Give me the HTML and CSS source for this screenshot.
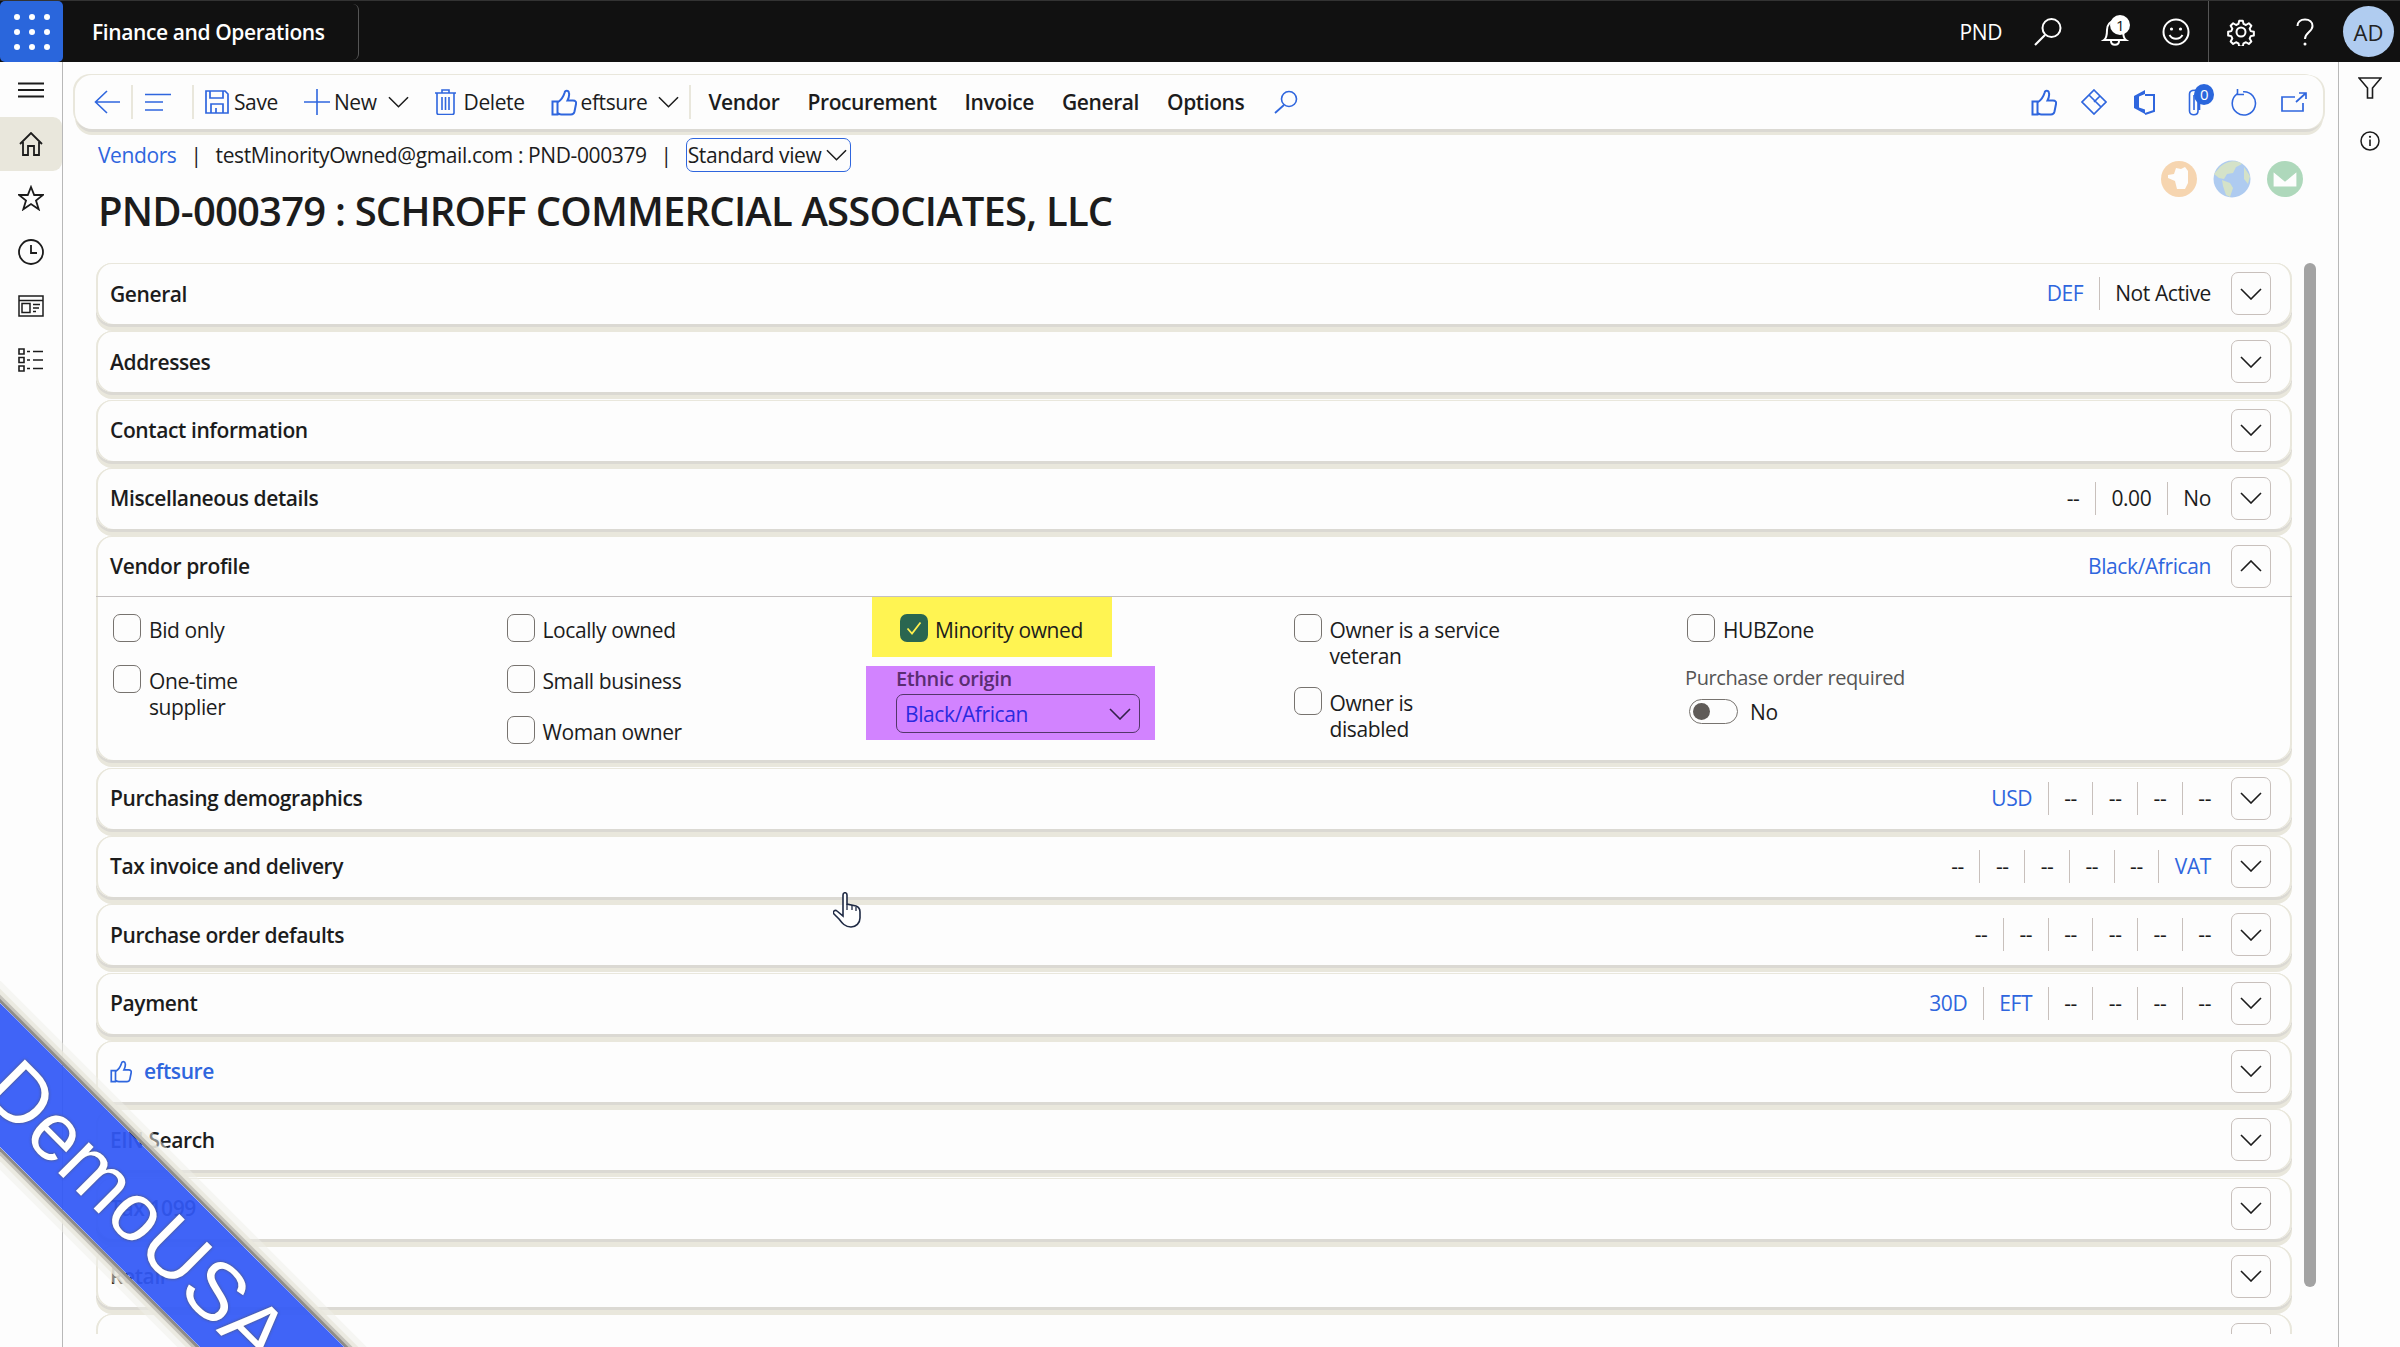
FILE: index.html
```html
<!DOCTYPE html>
<html lang="en">
<head>
    <meta charset="UTF-8">
    <meta name="viewport" content="width=device-width, initial-scale=1.0">
    <link rel="stylesheet" href="styles.css">
    <title>Finance and Operations</title>
</head>
<body>
<svg class="sprite" width="0" height="0">
    <symbol id="chev" viewBox="0 0 22 12"><path d="M1 1l10 10L21 1" fill="none" stroke="currentColor" stroke-width="1.6"/></symbol>
    <symbol id="thumb" viewBox="0 0 26 27"><path d="M1.5 12.5h5v13h-5zM6.500 13.500c3-2 6-6 7-9.500.5-3 4-3 4.500 0 .6 3-.5 5.500-1.500 7.500h5.500c2.500 0 3.500 1.500 3 3.500l-1.500 7.500c-.5 2-1.500 3-3.500 3H10.500c-2 0-3-1-4-1.500" fill="none" stroke="currentColor" stroke-width="2"/></symbol>
</svg>

<header class="topbar">
    <div class="launcher">
        <i></i><i></i><i></i><i></i><i></i><i></i><i></i><i></i><i></i>
    </div>
    <div class="app-name">Finance and Operations</div>
    <div class="top-right">
        <span class="company">PND</span>
        <span class="top-btn"><svg width="30" height="30" viewBox="0 0 30 30"><circle cx="18.500" cy="11" r="9" fill="none" stroke="#fff" stroke-width="2"/><path d="M12 18L2 28" stroke="#fff" stroke-width="2.200"/></svg></span>
        <span class="top-btn bell"><svg width="32" height="30" viewBox="0 0 32 30"><path d="M4 23c3-2 3-6 3-10 0-5 3-9 8-9s8 4 8 9c0 4 0 8 3 10zM11 24c0 5 8 5 8 0" fill="none" stroke="#fff" stroke-width="2"/></svg><b class="bell-badge">1</b></span>
        <span class="top-btn"><svg width="28" height="28" viewBox="0 0 28 28"><circle cx="14" cy="14" r="12.500" fill="none" stroke="#fff" stroke-width="2"/><circle cx="9.500" cy="11" r="1.600" fill="#fff"/><circle cx="18.500" cy="11" r="1.600" fill="#fff"/><path d="M7.500 17c3 5 10 5 13 0" fill="none" stroke="#fff" stroke-width="2"/></svg></span>
        <span class="top-sep"></span>
        <span class="top-btn"><svg width="28" height="28" viewBox="0 0 28 28"><circle cx="14" cy="14" r="4.500" fill="none" stroke="#fff" stroke-width="2"/><path d="M12 1.500h4l.8 3.500 2.700 1.200 3.200-1.900 2.800 2.800-1.900 3.200 1.200 2.700 3.500.8v4l-3.500.8-1.200 2.700 1.900 3.200-2.800 2.800-3.200-1.900-2.700 1.200-.8 3.500h-4l-.8-3.500-2.700-1.200-3.200 1.900-2.800-2.800 1.900-3.200-1.200-2.700-3.500-.8v-4l3.500-.8 1.200-2.700-1.900-3.200 2.800-2.800 3.200 1.900 2.700-1.200z" transform="translate(1.400 1.400) scale(.9)" fill="none" stroke="#fff" stroke-width="2.200" stroke-linejoin="round"/></svg></span>
        <span class="top-btn"><svg width="18" height="28" viewBox="0 0 18 28"><path d="M1.500 8c0-4 3-6.500 7.500-6.500S16.500 4 16.500 8c0 6-7.500 6-7.500 13" fill="none" stroke="#fff" stroke-width="2"/><circle cx="9" cy="26" r="1.500" fill="#fff"/></svg></span>
        <span class="avatar">AD</span>
    </div>
</header>

<div class="shell">
    <nav class="leftnav">
        <div class="nav-item"><svg width="26" height="16" viewBox="0 0 26 16"><path d="M0 1.500h26M0 8h26M0 14.500h26" stroke="#1c1c1c" stroke-width="2"/></svg></div>
        <div class="nav-item active"><svg width="24" height="24" viewBox="0 0 24 24"><path d="M1 12L12 1l11 11M4 10v13h5v-9h6v9h5V10" fill="none" stroke="#1c1c1c" stroke-width="1.800"/></svg></div>
        <div class="nav-item"><svg width="26" height="26" viewBox="0 0 26 26"><path d="M13 2l3.200 8H25l-7 5.500 2.700 8.800L13 19l-7.700 5.300L8 15.500 1 10h8.800z" fill="none" stroke="#1c1c1c" stroke-width="1.800"/></svg></div>
        <div class="nav-item"><svg width="26" height="26" viewBox="0 0 26 26"><circle cx="13" cy="13" r="12" fill="none" stroke="#1c1c1c" stroke-width="1.800"/><path d="M13 6v8h6" fill="none" stroke="#1c1c1c" stroke-width="1.800"/></svg></div>
        <div class="nav-item"><svg width="26" height="22" viewBox="0 0 26 22"><path d="M1 1h24v20H1zM1 5.500h24M4 8.500h8v9H4zM15 9.500h7M15 13h6M15 16.500h3" fill="none" stroke="#1c1c1c" stroke-width="1.500"/></svg></div>
        <div class="nav-item"><svg width="26" height="24" viewBox="0 0 26 24"><path d="M1 1h5v5H1zM1 9.500h5v5H1zM1 18h5v5H1zM9 3.500h3M15 3.500h10M9 12h3M15 12h10M9 20.500h3M15 20.500h10" fill="none" stroke="#1c1c1c" stroke-width="1.600"/></svg></div>
    </nav>

    <main class="main">
        <div class="toolbar">
            <span class="tb-icon first"><svg width="26" height="24" viewBox="0 0 26 24"><path d="M13 1L1.500 12 13 23M2 12h24" fill="none" stroke="currentColor" stroke-width="1.600"/></svg></span>
            <span class="tb-sep"></span>
            <span class="tb-icon lines"><svg width="26" height="19" viewBox="0 0 26 19"><path d="M0 1.500h26M0 9h18M0 17h18" fill="none" stroke="currentColor" stroke-width="1.600"/></svg></span>
            <span class="tb-sep"></span>
            <span class="tb-btn save"><svg width="24" height="24" viewBox="0 0 24 24"><path d="M1 1h19l3 3v19H1zM5 1v7h13V1M6 23v-9h12v9M11 18v5" fill="none" stroke="currentColor" stroke-width="1.700"/></svg><span>Save</span></span>
            <span class="tb-btn new"><svg class="plus" width="26" height="26" viewBox="0 0 26 26"><path d="M0 13h26M13 0v26" stroke="currentColor" stroke-width="1.600"/></svg><span>New</span><svg class="tb-chev" width="21" height="12"><use href="#chev"/></svg></span>
            <span class="tb-btn del"><svg width="21" height="26" viewBox="0 0 21 26"><path d="M0 4h21M7 4V1h7v3M2 4v20c0 1 1 1.500 2 1.500h13c1 0 2-.5 2-1.500V4M7 8v13M10.500 8v13M14 8v13" fill="none" stroke="currentColor" stroke-width="1.600"/></svg><span>Delete</span></span>
            <span class="tb-btn eft"><svg width="26" height="27"><use href="#thumb"/></svg><span>eftsure</span><svg class="tb-chev" width="21" height="12"><use href="#chev"/></svg></span>
            <span class="tb-sep menu-sep"></span>
            <span class="tb-menu">Vendor</span>
            <span class="tb-menu">Procurement</span>
            <span class="tb-menu">Invoice</span>
            <span class="tb-menu">General</span>
            <span class="tb-menu">Options</span>
            <span class="tb-icon find"><svg width="24" height="24" viewBox="0 0 24 24"><circle cx="15" cy="9" r="7.500" fill="none" stroke="currentColor" stroke-width="1.600"/><path d="M10 15L1 23" stroke="currentColor" stroke-width="1.800"/></svg></span>
            <div class="tb-right">
                <span class="tb-r thumb-r"><svg width="26" height="27"><use href="#thumb"/></svg></span>
                <span class="tb-r"><svg width="26" height="26" viewBox="0 0 26 26"><path d="M13 1l12 12-12 12L1 13zM8 6l12 12M13 13l6-6" fill="none" stroke="currentColor" stroke-width="1.700"/></svg></span>
                <span class="tb-r"><svg width="22" height="26" viewBox="0 0 22 26"><path d="M1 7L12 1v24L1 19z" fill="currentColor"/><path d="M7 6h14v16l-9 3" fill="none" stroke="currentColor" stroke-width="2"/><path d="M6 7.500v11l6 2V5z" fill="#fdfdfd"/></svg></span>
                <span class="tb-r clip"><svg width="13" height="27" viewBox="0 0 13 27"><path d="M10 9v13c0 5-8.500 5-8.500 0V5c0-5 10-5 10 0v16M6 6v15" fill="none" stroke="currentColor" stroke-width="1.600"/></svg><b class="clip-badge">0</b></span>
                <span class="tb-r"><svg width="28" height="28" viewBox="0 0 28 28"><path d="M7 5a12.500 12.500 0 1 0 6-2" fill="none" stroke="currentColor" stroke-width="1.700"/><path d="M7 0v6h7" fill="none" stroke="currentColor" stroke-width="1.700"/></svg></span>
                <span class="tb-r"><svg width="26" height="20" viewBox="0 0 26 20"><path d="M14 5H1v14h21v-8M15 10L25 1M18 1h7v6" fill="none" stroke="currentColor" stroke-width="1.700"/></svg></span>
            </div>
        </div>

        <div class="page-head">
            <div class="page-left">
                <div class="crumbs">
                    <a class="link">Vendors</a>
                    <span class="pipe">|</span>
                    <span>testMinorityOwned@gmail.com : PND-000379</span>
                    <span class="pipe">|</span>
                    <span class="view-select">Standard view <svg width="21" height="12"><use href="#chev"/></svg></span>
                </div>
                <h1 class="page-title">PND-000379 : SCHROFF COMMERCIAL ASSOCIATES, LLC</h1>
            </div>
            <div class="quick-icons">
                <svg width="36" height="36" viewBox="0 0 36 36"><circle cx="18" cy="18" r="18" fill="#f6d5b0"/><path d="M7 14l6-1 2-6 5 1 4-2 3 4v12l-3 6h-8l-2-8-7-3z" fill="#fdfdfd"/></svg>
                <svg width="38" height="38" viewBox="0 0 38 38"><circle cx="19" cy="19" r="18.500" fill="#aecbf0"/><path d="M6 8c6-7 18-9 23-4l-6 3-3 6-6 1-3 5-5-1-5-4zM31 7l6 9-2 8-4-5zM9 20l8 3 3 5-3 9-4-2-3-9z" fill="#d4e2c8"/></svg>
                <svg width="36" height="36" viewBox="0 0 36 36"><circle cx="18" cy="18" r="18" fill="#aed8bb"/><path d="M6 10h24v16H6zM6 10l12 10 12-10" fill="#fdfdfd" stroke="#aed8bb" stroke-width="1.200"/></svg>
            </div>
        </div>

        <div class="scroll-area">
            <div class="panels">
                <section class="panel">
                    <div class="panel-head">
                        <span class="panel-title">General</span>
                        <div class="summary"><span class="sum link">DEF</span><span class="sum">Not Active</span></div>
                        <span class="expand"><svg width="22" height="12"><use href="#chev"/></svg></span>
                    </div>
                </section>
                <section class="panel">
                    <div class="panel-head">
                        <span class="panel-title">Addresses</span>
                        <span class="expand"><svg width="22" height="12"><use href="#chev"/></svg></span>
                    </div>
                </section>
                <section class="panel">
                    <div class="panel-head">
                        <span class="panel-title">Contact information</span>
                        <span class="expand"><svg width="22" height="12"><use href="#chev"/></svg></span>
                    </div>
                </section>
                <section class="panel">
                    <div class="panel-head">
                        <span class="panel-title">Miscellaneous details</span>
                        <div class="summary"><span class="sum">--</span><span class="sum">0.00</span><span class="sum">No</span></div>
                        <span class="expand"><svg width="22" height="12"><use href="#chev"/></svg></span>
                    </div>
                </section>

                <section class="panel open">
                    <div class="panel-head">
                        <span class="panel-title">Vendor profile</span>
                        <div class="summary"><span class="sum link">Black/African</span></div>
                        <span class="expand"><svg class="up" width="22" height="12"><use href="#chev"/></svg></span>
                    </div>
                    <div class="panel-body">
                        <div class="col">
                            <div class="check"><span class="box"></span><span class="check-label">Bid only</span></div>
                            <div class="check"><span class="box"></span><span class="check-label">One-time<br>supplier</span></div>
                        </div>
                        <div class="col">
                            <div class="check"><span class="box"></span><span class="check-label">Locally owned</span></div>
                            <div class="check"><span class="box"></span><span class="check-label">Small business</span></div>
                            <div class="check"><span class="box"></span><span class="check-label">Woman owner</span></div>
                        </div>
                        <div class="col col-mark">
                            <div class="mark-yellow">
                                <span class="box checked"><svg width="16" height="14" viewBox="0 0 16 14"><path d="M1.500 7.500l4.500 5L14.500 1.500" fill="none" stroke="#fff04e" stroke-width="1.800"/></svg></span>
                                <span class="check-label">Minority owned</span>
                            </div>
                            <div class="mark-purple">
                                <div class="field-label dark">Ethnic origin</div>
                                <div class="select"><span>Black/African</span><svg width="22" height="12"><use href="#chev"/></svg></div>
                            </div>
                        </div>
                        <div class="col">
                            <div class="check wrap"><span class="box"></span><span class="check-label">Owner is a service<br>veteran</span></div>
                            <div class="check"><span class="box"></span><span class="check-label">Owner is<br>disabled</span></div>
                        </div>
                        <div class="col">
                            <div class="check"><span class="box"></span><span class="check-label">HUBZone</span></div>
                            <div class="field-label shift">Purchase order required</div>
                            <div class="toggle-row"><span class="toggle"><i></i></span><span>No</span></div>
                        </div>
                    </div>
                </section>

                <section class="panel">
                    <div class="panel-head">
                        <span class="panel-title">Purchasing demographics</span>
                        <div class="summary"><span class="sum link">USD</span><span class="sum">--</span><span class="sum">--</span><span class="sum">--</span><span class="sum">--</span></div>
                        <span class="expand"><svg width="22" height="12"><use href="#chev"/></svg></span>
                    </div>
                </section>
                <section class="panel">
                    <div class="panel-head">
                        <span class="panel-title">Tax invoice and delivery</span>
                        <div class="summary"><span class="sum">--</span><span class="sum">--</span><span class="sum">--</span><span class="sum">--</span><span class="sum">--</span><span class="sum link">VAT</span></div>
                        <span class="expand"><svg width="22" height="12"><use href="#chev"/></svg></span>
                    </div>
                </section>
                <section class="panel">
                    <div class="panel-head">
                        <span class="panel-title">Purchase order defaults</span>
                        <div class="summary"><span class="sum">--</span><span class="sum">--</span><span class="sum">--</span><span class="sum">--</span><span class="sum">--</span><span class="sum">--</span></div>
                        <span class="expand"><svg width="22" height="12"><use href="#chev"/></svg></span>
                    </div>
                </section>
                <section class="panel">
                    <div class="panel-head">
                        <span class="panel-title">Payment</span>
                        <div class="summary"><span class="sum link">30D</span><span class="sum link">EFT</span><span class="sum">--</span><span class="sum">--</span><span class="sum">--</span><span class="sum">--</span></div>
                        <span class="expand"><svg width="22" height="12"><use href="#chev"/></svg></span>
                    </div>
                </section>
                <section class="panel">
                    <div class="panel-head">
                        <span class="panel-title link"><svg class="title-thumb" width="22" height="23"><use href="#thumb"/></svg>eftsure</span>
                        <span class="expand"><svg width="22" height="12"><use href="#chev"/></svg></span>
                    </div>
                </section>
                <section class="panel">
                    <div class="panel-head">
                        <span class="panel-title">EIN Search</span>
                        <span class="expand"><svg width="22" height="12"><use href="#chev"/></svg></span>
                    </div>
                </section>
                <section class="panel">
                    <div class="panel-head">
                        <span class="panel-title">Tax 1099</span>
                        <span class="expand"><svg width="22" height="12"><use href="#chev"/></svg></span>
                    </div>
                </section>
                <section class="panel">
                    <div class="panel-head">
                        <span class="panel-title">Retail</span>
                        <span class="expand"><svg width="22" height="12"><use href="#chev"/></svg></span>
                    </div>
                </section>
                <section class="panel">
                    <div class="panel-head">
                        <span class="panel-title"></span>
                        <span class="expand"><svg width="22" height="12"><use href="#chev"/></svg></span>
                    </div>
                </section>
            </div>
            <div class="scrollbar"></div>
        </div>
    </main>

    <aside class="rail">
        <svg class="rail-filter" width="24" height="22" viewBox="0 0 24 22"><path d="M1 1h22l-8.500 10v10h-5V11z" fill="none" stroke="#1c1c1c" stroke-width="1.600"/></svg>
        <svg class="rail-info" width="20" height="20" viewBox="0 0 20 20"><circle cx="10" cy="10" r="9" fill="none" stroke="#1c1c1c" stroke-width="1.500"/><path d="M10 8.500v6.500" stroke="#1c1c1c" stroke-width="1.600"/><circle cx="10" cy="5.800" r="1.100" fill="#1c1c1c"/></svg>
    </aside>
</div>

<svg class="hand" width="28" height="36" viewBox="0 0 28 36"><path d="M10 14V3c0-3 4-3 4 0v9l9 2c3 1 4 3 4 6v6c0 5-4 9-9 9-6 0-9-4-12-8l-5-5c-2-2 1-5 3-3l6 5z" fill="#fff" stroke="#1f2a44" stroke-width="1.600"/><path d="M14 12v6M19 13v5M23 15v4" stroke="#1f2a44" stroke-width="1.300"/></svg>

<div class="ribbon"><span>DemoUSA</span></div>
</body>
</html>
```

FILE: styles.css
```css
html, body {
    margin: 0;
    width: 2400px;
    height: 1347px;
    overflow: hidden;
}

body {
    position: relative;
    background-color: #fdfdfd;
    color: #1c1c1c;
    font-family: "Open Sans", "Noto Sans", sans-serif;
    font-size: 21px;
    letter-spacing: -0.4px;
}

.sprite {
    position: absolute;
}

.link {
    color: #2f66de;
}

/* top bar */
.topbar {
    display: flex;
    align-items: center;
    height: 62px;
    background-color: #111;
    border-top: 1px solid #333;
    box-sizing: border-box;
    color: #fff;
}

.launcher {
    display: grid;
    grid-template-columns: repeat(3, 6px);
    grid-auto-rows: 6px;
    gap: 9px;
    align-content: center;
    justify-content: center;
    width: 63px;
    height: 61px;
    background-color: #2a66dc;
    border-radius: 5px;
}

.launcher i {
    background-color: #fff;
    border-radius: 50%;
}

.app-name {
    display: flex;
    align-items: center;
    width: 266px;
    height: 56px;
    margin-left: 29px;
    border-right: 1px solid #555;
    border-radius: 0 6px 6px 0;
    font-weight: 600;
}

.top-right {
    display: flex;
    align-items: center;
    margin-left: auto;
    height: 100%;
}

.company {
    margin-right: 14px;
}

.top-btn {
    position: relative;
    display: flex;
    align-items: center;
    justify-content: center;
    width: 64px;
    height: 100%;
}

.top-sep {
    width: 1px;
    height: 100%;
    background-color: #555;
}

.bell svg {
    margin-left: 8px;
}

.bell-badge {
    position: absolute;
    top: 14px;
    left: 30px;
    width: 20px;
    height: 20px;
    border-radius: 50%;
    background-color: #fff;
    color: #111;
    font-size: 15px;
    font-weight: 400;
    line-height: 20px;
    text-align: center;
}

.avatar {
    display: flex;
    align-items: center;
    justify-content: center;
    width: 51px;
    height: 51px;
    margin: 0 6px 0 6px;
    border-radius: 50%;
    background-color: #b0ccf0;
    color: #222;
    font-size: 22px;
    letter-spacing: 0;
}

.shell {
    display: flex;
    height: 1285px;
}

/* left nav */
.leftnav {
    flex: none;
    width: 62px;
    padding-top: 1px;
    border-right: 1px solid #b8b8b8;
}

.nav-item {
    display: flex;
    align-items: center;
    justify-content: center;
    height: 54px;
}

.nav-item.active {
    background-color: #e9e7dc;
    border-radius: 0 9px 9px 0;
}

.main {
    flex: 1;
    min-width: 0;
    display: flex;
    flex-direction: column;
}

/* action bar */
.toolbar {
    display: flex;
    align-items: center;
    flex: none;
    width: 2248px;
    height: 54px;
    margin: 13px 0 0 12px;
    padding-left: 19px;
    box-sizing: border-box;
    background-color: #fdfdfd;
    border-radius: 17px;
    color: #2f66de;
    box-shadow: -2px -1px 0 #e9e7dc, 2px 0 0 #e9e7dc, 0 3px 0 #dbd9d3, 0 6px 0 #e9e7dc;
}

.tb-icon {
    display: flex;
    align-items: center;
}

.tb-sep {
    flex: none;
    width: 2px;
    height: 34px;
    background-color: #e9e7dc;
}

.tb-icon.first {
    margin-right: 11px;
}

.tb-icon.lines {
    margin: 0 21px 0 12px;
}

.tb-btn {
    display: flex;
    align-items: center;
    color: #1c1c1c;
}

.tb-btn svg {
    flex: none;
    color: #2f66de;
}

.tb-btn .tb-chev {
    color: #1c1c1c;
    margin-left: 7px;
}

.tb-btn.save {
    margin-left: 11px;
    gap: 5px;
}

.tb-btn.new {
    margin-left: 26px;
    gap: 4px;
}

.tb-btn.del {
    margin-left: 26px;
    gap: 8px;
}

.tb-btn.eft {
    margin-left: 26px;
    gap: 4px;
}

.menu-sep {
    margin-left: 10px;
}

.tb-menu {
    margin-left: 17px;
    margin-right: 11px;
    color: #1c1c1c;
    font-weight: 600;
}

.tb-icon.find {
    margin-left: 19px;
}

.tb-right {
    display: flex;
    align-items: center;
    margin-left: auto;
    height: 100%;
}

.tb-r {
    position: relative;
    display: flex;
    align-items: center;
    justify-content: center;
    width: 26px;
    margin-right: 24px;
}

.tb-r:last-child {
    margin-right: 16px;
}

.clip-badge {
    position: absolute;
    top: -5px;
    left: 13px;
    width: 20px;
    height: 21px;
    border-radius: 50%;
    background-color: #2a66dc;
    color: #fff;
    font-size: 15px;
    font-weight: 400;
    line-height: 21px;
    text-align: center;
}

/* page title */
.page-head {
    display: flex;
    justify-content: space-between;
    flex: none;
    height: 134px;
    padding-left: 35px;
    padding-right: 35px;
    box-sizing: border-box;
}

.crumbs {
    display: flex;
    align-items: center;
    height: 34px;
    margin-top: 9px;
}

.pipe {
    margin: 0 14px;
}

.view-select {
    display: flex;
    align-items: center;
    gap: 5px;
    height: 34px;
    padding: 0 3px 0 1px;
    box-sizing: border-box;
    border: 1px solid #2f66de;
    border-radius: 7px;
}

.page-title {
    margin: 11px 0 0 0;
    font-size: 40px;
    font-weight: 600;
    line-height: 56px;
    letter-spacing: -0.8px;
}

.quick-icons {
    display: flex;
    align-items: center;
    gap: 16px;
    height: 38px;
    margin-top: 31px;
}

/* fasttabs */
.scroll-area {
    display: flex;
    height: 1071px;
    overflow: hidden;
    padding-left: 33px;
}

.panels {
    flex: none;
    width: 2196px;
}

.panel {
    margin-bottom: 7.330px;
    background-color: #fdfdfd;
    border-radius: 16px;
    box-shadow: inset 2px 0 0 #e9e7dc, inset -2px 0 0 #e9e7dc, inset 0 1px 0 #e9e7dc, 0 3px 0 #dbd9d3, 0 7px 0 #e9e7dc;
}

.panel-head {
    display: flex;
    align-items: center;
    height: 61px;
    padding: 0 21px 0 14px;
    box-sizing: border-box;
}

.panel.open .panel-head {
    height: 60px;
    border-bottom: 0;
}

.panel-title {
    display: flex;
    align-items: center;
    font-weight: 600;
}

.title-thumb {
    margin-right: 12px;
}

.summary {
    display: flex;
    align-items: center;
    margin-left: auto;
}

.expand {
    display: flex;
    align-items: center;
    justify-content: center;
    flex: none;
    width: 40px;
    height: 43px;
    margin-left: 20px;
    box-sizing: border-box;
    border: 1px solid #c8c0bc;
    border-radius: 7px;
}

.panel-title + .expand {
    margin-left: auto;
}

.up {
    transform: scaleY(-1);
}

.sum {
    height: 33px;
    padding: 0 15.500px;
    line-height: 33px;
}

.sum + .sum {
    border-left: 1px solid #c8c0bc;
}

.sum:last-child {
    padding-right: 0;
}

.panel-body {
    display: grid;
    grid-template-columns: repeat(5, 393.500px);
    height: 164px;
    padding: 17px 0 0 17px;
    box-sizing: border-box;
    border-top: 1px solid #c4c0c0;
}

.check {
    display: flex;
    gap: 8px;
    margin-bottom: 22px;
}

.check.wrap {
    margin-bottom: 18px;
}

.box {
    display: flex;
    align-items: center;
    justify-content: center;
    flex: none;
    width: 28px;
    height: 28px;
    box-sizing: border-box;
    border: 1px solid #77736f;
    border-radius: 7px;
}

.box.checked {
    background-color: #2a6650;
    border: 0;
}

.check-label {
    margin-top: 3px;
    line-height: 26px;
}

.col-mark {
    margin: -17px 0 0 -34px;
}

.mark-yellow {
    display: flex;
    align-items: flex-start;
    gap: 7px;
    width: 240px;
    height: 60px;
    margin-left: 6px;
    padding: 17px 0 0 28px;
    box-sizing: border-box;
    background-color: #fff452;
}

.mark-purple {
    width: 289px;
    height: 74px;
    margin-top: 9px;
    padding-left: 30px;
    box-sizing: border-box;
    background-color: #d283ff;
}

.field-label {
    font-size: 20px;
    line-height: 26px;
    color: #555;
}

.field-label.dark {
    padding-top: 0;
    height: 28px;
    font-weight: 600;
    color: #5a2d72;
}

.field-label.shift {
    margin-left: -2px;
}

.select {
    display: flex;
    align-items: center;
    justify-content: space-between;
    width: 244px;
    height: 39px;
    padding: 0 8px;
    box-sizing: border-box;
    border: 1px solid #54366a;
    border-radius: 7px;
    color: #2a2ae0;
}

.select svg {
    color: #33204a;
}

.toggle-row {
    display: flex;
    align-items: center;
    gap: 12px;
    margin: 8px 0 0 2px;
    height: 25px;
}

.toggle {
    display: flex;
    align-items: center;
    width: 49px;
    height: 25px;
    padding-left: 3px;
    box-sizing: border-box;
    border: 1px solid #77736f;
    border-radius: 13px;
}

.toggle i {
    width: 17px;
    height: 17px;
    border-radius: 50%;
    background-color: #5f5b58;
}

.scrollbar {
    flex: none;
    width: 12px;
    height: 1024px;
    margin-left: 12px;
    border-radius: 6px;
    background-color: #a3a3a3;
}

/* right rail */
.rail {
    flex: none;
    width: 62px;
    box-sizing: border-box;
    border-left: 1px solid #b8b8b8;
    display: flex;
    flex-direction: column;
    align-items: center;
}

.rail-filter {
    margin-top: 15px;
}

.rail-info {
    margin-top: 32px;
}

/* things lying over the page */
.hand {
    position: absolute;
    left: 833px;
    top: 892px;
}

.ribbon {
    position: absolute;
    left: -263px;
    top: 1161px;
    width: 800px;
    height: 102px;
    display: flex;
    align-items: center;
    justify-content: center;
    transform: rotate(45deg);
    background-color: rgba(50, 88, 246, 0.93);
    box-shadow: 0 0 0 3px #8e8c88, 0 0 0 6px #c4c2bb, 0 0 0 10px rgba(233, 231, 220, 0.8), 0 0 0 16px rgba(240, 240, 234, 0.5);
    color: #fff;
    font-family: "Liberation Sans", Arial, sans-serif;
    font-size: 82px;
    letter-spacing: 0;
    text-shadow: 0 0 3px #555;
}
```
